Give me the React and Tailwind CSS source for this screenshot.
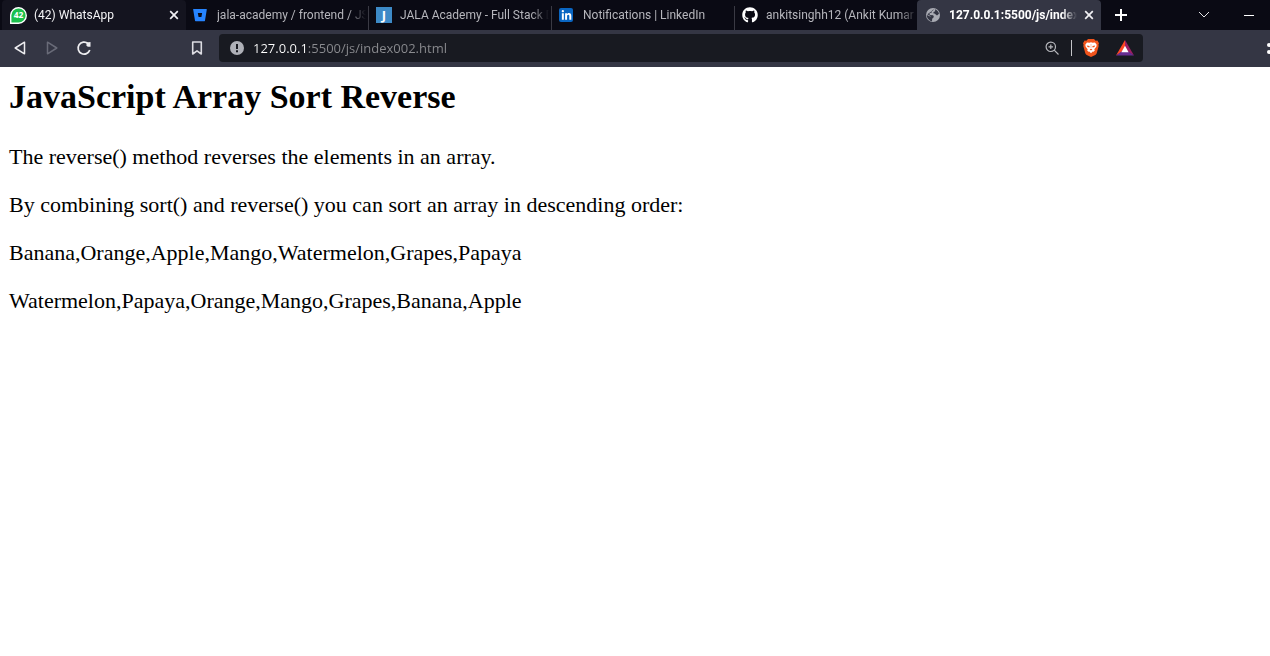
import { FaBitbucket, FaGithub, FaLinkedinIn } from "react-icons/fa";

function WhatsAppIcon() {
  return (
    <svg viewBox="1 0 16 17" className="h-[18px] w-[17px]" aria-hidden="true">
      <path d="M1 17V8.500A8 8 0 1 1 9 17Z" fill="#fff" />
      <path d="M2.300 15.700V8.700A6.700 6.700 0 1 1 9 15.700Z" fill="#1bc04c" />
      <text x="9" y="11.500" textAnchor="middle" fontSize="8" fontWeight="700" fontFamily="Noto Sans, sans-serif" fill="#fff">42</text>
    </svg>
  );
}

function GlobeIcon() {
  return (
    <svg viewBox="0 0 16 16" className="size-4" aria-hidden="true">
      <circle cx="8" cy="8" r="7" fill="#a9abb3" />
      <path d="M9.500 2.300 7 3.300 6.800 5.400 4.500 6.200 4.800 7.900 8.200 8.300 8.900 9.900 7.200 11.800 7 14.200C4 13.700 1.800 11 1.800 8L5.700 9.700 5.400 8.900 2.300 7.200 M10 2.200C12 2.900 13.600 4.600 14 6.800L12 8.600 9.500 6.500 8.300 6.300 8.600 4.900 10.200 4.300Z" fill="#343644" />
    </svg>
  );
}

function BraveIcon() {
  return (
    <svg viewBox="0 0 16 18" className="h-[18px] w-4" aria-hidden="true">
      <path d="M5 0h6l1.600 1.700 1.800-.1 1.600 2.600-.6 1.600.3 1.200-2 7.300c-.3.900-.8 1.400-1.400 1.800L8 18l-4.300-1.900c-.6-.4-1.100-.9-1.400-1.800L.3 7l.3-1.200L0 4.200l1.600-2.600 1.800.1Z" fill="#f1541c" />
      <path d="M4 3.400 6.500 3.700 8 3.300l1.500.4L12 3.400l1.700 2.300-.4 2-2 2.600.5 1.300-1.300 1.200-.8-.2L8 14.300l-1.700-1.700-.8.2-1.300-1.200.5-1.300-2-2.600-.4-2Z" fill="#fff" />
      <path d="M3.700 6.500 6.700 7 6.300 8.500 4.600 8Zm8.600 0L9.300 7l.4 1.500L11.400 8ZM6.600 10.200 8 9.700l1.400.5L8 11.400Z" fill="#f1541c" />
      <path d="M7.600 5h.8v4h-.8Z" fill="#f9b59a" />
    </svg>
  );
}

const tabs = [
  { title: "(42) WhatsApp", icon: <WhatsAppIcon />, state: "hover" },
  { title: "jala-academy / frontend / JS", icon: <FaBitbucket className="size-[14px] text-[#2684ff]" />, state: "idle" },
  {
    title: "JALA Academy - Full Stack D",
    icon: <span className="flex size-4 items-center justify-center bg-[#3d8ac7] font-['Open_Sans',sans-serif] text-[13px] leading-none font-bold text-white">J</span>,
    state: "idle",
  },
  {
    title: "Notifications | LinkedIn",
    icon: <span className="flex size-[14px] items-center justify-center rounded-xs bg-[#0a66c2]"><FaLinkedinIn className="size-[11px] text-white" /></span>,
    state: "idle",
  },
  { title: "ankitsinghh12 (Ankit Kumar", icon: <FaGithub className="size-4 text-white" />, state: "last" },
  { title: "127.0.0.1:5500/js/index0", icon: <GlobeIcon />, state: "active" },
];

const tabStyles = {
  hover: "w-[184px] pl-2 bg-[#14141f] text-[#f4f4f6] rounded-t",
  idle: "w-[183px] pl-[7px] text-[#b6b6bc]",
  last: "w-[182px] pl-[7px] text-[#b6b6bc]",
  active: "w-[184px] pl-2 bg-[#343644] text-white font-bold rounded-t",
};

function CloseIcon() {
  return (
    <svg viewBox="0 0 10 10" className="size-[10px]" fill="none" stroke="#f1f1f4" strokeWidth="1.700" aria-hidden="true">
      <path d="m1.200 1.200 7.600 7.600m0-7.600L1.200 8.800" />
    </svg>
  );
}

function Tab({ title, icon, state }) {
  const closable = state === "hover" || state === "active";
  return (
    <div className={`flex h-full items-center ${tabStyles[state]}`}>
      <button role="tab" aria-selected={state === "active"} className="flex min-w-0 flex-1 items-center gap-1 text-left">
        <span className="flex w-5 shrink-0 items-center">{icon}</span>
        <span className="flex-1 overflow-hidden mask-r-from-88% text-xs leading-4 whitespace-nowrap">{title}</span>
      </button>
      {closable && (
        <button aria-label={`Close ${title}`} className="flex w-6 justify-center">
          <CloseIcon />
        </button>
      )}
      {state === "idle" && <span className="ml-[2px] h-6 w-px self-end bg-[#3a3a44]" />}
    </div>
  );
}

function Browser() {
  return (
    <header className="overflow-hidden bg-[#343644] font-['Open_Sans','Noto_Sans',sans-serif]">
      <div className="flex h-[30px] items-center bg-[#0a0a14] pl-[2px]">
        <div role="tablist" className="flex h-full font-[Roboto,sans-serif]">
          {tabs.map((tab) => (
            <Tab key={tab.title} {...tab} />
          ))}
        </div>
        <button aria-label="New tab" className="flex w-10 justify-center">
          <svg viewBox="0 0 12 12" className="size-3" stroke="#fff" strokeWidth="2" aria-hidden="true">
            <path d="M6 0v12M0 6h12" />
          </svg>
        </button>
        <div className="ml-auto flex items-center">
          <button aria-label="Search tabs" className="flex w-12 justify-center">
            <svg viewBox="0 0 12 8" className="h-2 w-3" fill="none" stroke="#e5e5e8" aria-hidden="true">
              <path d="m1 1 5 5 5-5" />
            </svg>
          </button>
          <button aria-label="Minimize" className="flex w-[42px] justify-center">
            <span className="h-px w-[10px] bg-white" />
          </button>
        </div>
      </div>
      <div className="flex items-center pt-1 pb-[5px]">
        <nav className="flex w-[219px] items-center gap-4 pl-3 pr-[14px]">
          <button aria-label="Back" className="flex size-4 items-center justify-center">
            <svg viewBox="0 0 16 16" className="size-4" fill="none" stroke="#ededf0" strokeWidth="1.500" strokeLinejoin="round" aria-hidden="true">
              <path d="M12.500 2.200v11.600L3.200 8Z" />
            </svg>
          </button>
          <button aria-label="Forward" disabled className="flex size-4 items-center justify-center">
            <svg viewBox="0 0 16 16" className="size-4" fill="none" stroke="#696b78" strokeWidth="1.500" strokeLinejoin="round" aria-hidden="true">
              <path d="M3.500 2.200v11.600L12.800 8Z" />
            </svg>
          </button>
          <button aria-label="Reload" className="flex size-4 items-center justify-center">
            <svg viewBox="0 0 16 16" className="size-4" fill="none" stroke="#ededf0" strokeWidth="1.700" aria-hidden="true">
              <path d="M13.800 10A6 6 0 1 1 12 3.500" />
              <path d="M10.500 2.500 14.500 2v4.800h-2.800L10.500 5.500Z" fill="#ededf0" stroke="none" />
            </svg>
          </button>
          <button aria-label="Bookmark this page" className="ml-auto flex size-4 items-center justify-center">
            <svg viewBox="0 0 16 16" className="size-4" fill="none" stroke="#dcdce2" strokeWidth="1.600" strokeLinejoin="round" aria-hidden="true">
              <path d="M3.700 2h8.600v12L8 10.800l-4.300 3.200Z" />
            </svg>
          </button>
        </nav>
        <div className="flex h-7 min-w-0 flex-1 items-center rounded bg-[#181a21] pr-[9px] pl-[11px]">
          <button aria-label="Site information" className="flex">
            <svg viewBox="0 0 14 14" className="size-[14px]" aria-hidden="true">
              <circle cx="7" cy="7" r="7" fill="#aeb0b7" />
              <path d="M6 3h2v5H6zM6 9.300h2v2H6z" fill="#181a21" />
            </svg>
          </button>
          <input
            aria-label="Address"
            defaultValue="127.0.0.1:5500/js/index002.html"
            className="ml-[9px] min-w-0 flex-1 bg-linear-to-r from-white from-[54px] to-[#8b8c90] to-[54px] bg-clip-text text-[13px] leading-5 text-transparent caret-white outline-none"
          />
          <button aria-label="Zoom" className="flex">
            <svg viewBox="0 0 14 14" className="size-[14px]" fill="none" stroke="#b6b7bc" strokeWidth="1.200" aria-hidden="true">
              <circle cx="5.800" cy="5.800" r="4.700" />
              <path d="m9.200 9.200 4.300 4.300M3.500 5.800h4.600M5.800 3.500v4.600" />
            </svg>
          </button>
          <span className="ml-3 h-4 w-px bg-[#c4c5c9]" />
          <button aria-label="Brave Shields" className="ml-[10px] flex w-[18px] justify-center">
            <BraveIcon />
          </button>
          <button aria-label="Brave Rewards" className="ml-4 flex">
            <svg viewBox="0 0 18 16" className="h-4 w-[18px]" aria-hidden="true">
              <path d="M9 0 0 15.500 9 10Z" fill="#ff4724" />
              <path d="m9 0 9 15.500L9 10Z" fill="#9e1f63" />
              <path d="M0 15.500h18L9 9Z" fill="#662d91" />
              <path d="m9 5.800 3.600 6.400H5.400Z" fill="#fff" />
            </svg>
          </button>
        </div>
        <div className="flex w-[127px] justify-end">
          <button aria-label="Menu" className="-mr-px flex flex-col gap-[3px]">
            <span className="size-1 rounded-xs bg-white" />
            <span className="size-1 rounded-xs bg-white" />
          </button>
        </div>
      </div>
    </header>
  );
}

export default function App() {
  return (
    <div className="min-h-screen bg-white">
      <Browser />
      <main className="px-[9px] pt-[10px] font-['Liberation_Serif',serif] text-[22px] leading-6 text-black">
        <h2 className="mb-7 text-[34px] leading-10 font-bold">JavaScript Array Sort Reverse</h2>
        <div className="flex flex-col gap-6">
          <p>The reverse() method reverses the elements in an array.</p>
          <p>By combining sort() and reverse() you can sort an array in descending order:</p>
          <p>Banana,Orange,Apple,Mango,Watermelon,Grapes,Papaya</p>
          <p>Watermelon,Papaya,Orange,Mango,Grapes,Banana,Apple</p>
        </div>
      </main>
    </div>
  );
}
